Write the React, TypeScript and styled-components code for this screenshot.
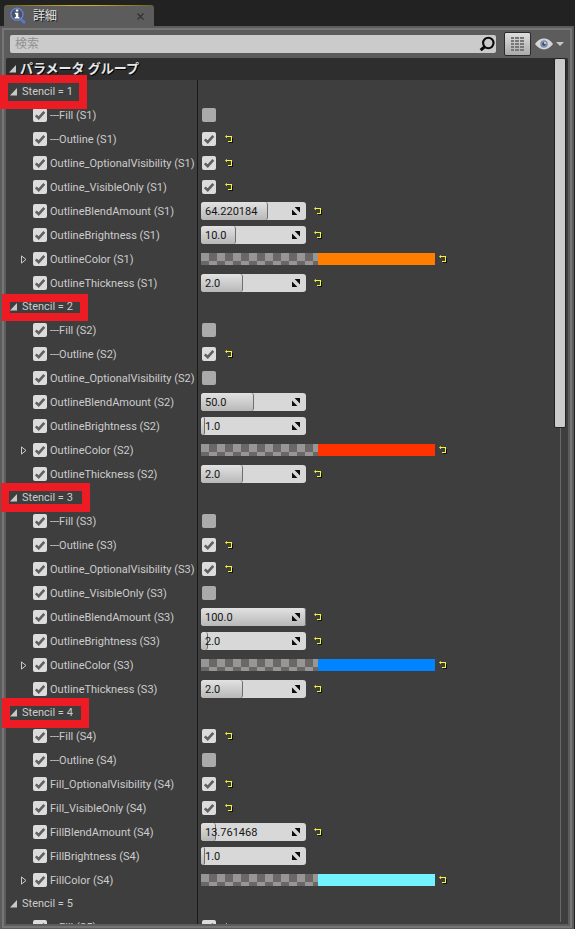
import React from 'react';
import styled, { createGlobalStyle, css } from 'styled-components';

const GlobalStyle = createGlobalStyle`
  *, *::before, *::after { box-sizing: border-box; }
  html, body { margin: 0; height: 100%; }
  #root { height: 100%; }
  body {
    background: #222222;
    color: #cccccc;
    font: 11px/17px Roboto, "Noto Sans CJK JP", sans-serif;
  }
  button, input { font: inherit; }
`;

const Page = styled.div`
  position: relative;
  display: flex;
  flex-direction: column;
  height: 100vh;
  padding: 5px 1px 0 0;
  overflow: hidden;
`;

const TabBar = styled.div`
  display: flex;
  flex: none;
  padding-left: 4px;
`;

const Tab = styled.div`
  display: flex;
  align-items: center;
  width: 150px;
  height: 21px;
  padding: 1px 10px 0 5px;
  background:
    linear-gradient(90deg, #6e6420, #cdb21a 45%, #cdb21a 60%, #6e6420) top / 100% 1px no-repeat,
    #5c5c5c;
  border-radius: 3px 3px 0 0;
`;

const TabTitle = styled.span`
  flex: 1;
  margin-left: 6px;
  color: #e2e2e2;
  font-size: 12px;
  line-height: 16px;
  text-shadow: 1px 1px 0 #1c1c1c;
`;

const PlainButton = styled.button`
  display: flex;
  flex: none;
  align-items: center;
  justify-content: center;
  padding: 0;
  border: 0;
  background: none;
  color: inherit;
`;

const Frame = styled.main`
  display: flex;
  flex: 1;
  min-height: 0;
  border: 2px solid #5c5c5c;
  border-bottom-width: 1px;
`;

const Panel = styled.div`
  display: flex;
  flex: 1;
  flex-direction: column;
  min-width: 0;
  border: 2px solid #767676;
  box-shadow: inset 0 0 0 2px #5c5c5c;
  background: #3e3e3e;
`;

const Toolbar = styled.div`
  display: flex;
  flex: none;
  align-items: center;
  height: 28px;
  padding: 0 5px 0 6px;
  background: #5c5c5c;
`;

const SearchBox = styled.label`
  display: flex;
  flex: 1;
  align-items: center;
  height: 18px;
  padding: 0 1px 0 5px;
  border-radius: 2px;
  background: #cbcbcb;
`;

const SearchInput = styled.input`
  flex: 1;
  min-width: 0;
  height: 18px;
  padding: 0;
  border: 0;
  outline: 0;
  background: none;
  color: #333333;
  font-size: 12px;
  &::placeholder { color: #929292; opacity: 1; }
`;

const GridButton = styled(PlainButton)`
  width: 27px;
  height: 24px;
  margin: 0 4px 0 8px;
  border: 1px solid #2a2a2a;
  border-radius: 2px;
  background: linear-gradient(#dedede, #aaaaaa);
`;

const Content = styled.div`
  display: flex;
  flex: 1;
  min-height: 0;
  margin: 0 2px 2px;
  overflow: hidden;
`;

const List = styled.div`
  flex: 1;
  min-width: 0;
  overflow: hidden;
`;

const Scroll = styled.div`
  position: absolute;
  top: 58px;
  right: 9px;
  bottom: 7px;
  display: flex;
  flex-direction: column;
  align-items: center;
  width: 12px;
`;

const Thumb = styled.div`
  flex: 0 0 42.8%;
  width: 12px;
  border: 1px solid #222222;
  border-radius: 2px;
  background: #cbcbcb;
`;

const Track = styled.div`
  flex: 1;
  width: 1px;
  background: #686868;
`;

const Category = styled.h1`
  display: flex;
  align-items: center;
  gap: 4px;
  height: 22px;
  margin: 0;
  padding-left: 3px;
  border-radius: 4px 4px 0 0;
  background: #2e2e2e;
  color: #e6e6e6;
  font-size: 13px;
  line-height: 20px;
  font-weight: 700;
  text-shadow: 1px 1px 0 #000000;
`;

const Groups = styled.div`
  background: linear-gradient(#181818, #181818) 191px 0 / 1px 100% no-repeat;
`;

const GroupHeader = styled.h2`
  display: flex;
  align-items: center;
  gap: 5px;
  height: 23px;
  margin: 0;
  padding-left: 4px;
  font-size: 11px;
  font-weight: 400;
`;

const Row = styled.div`
  display: grid;
  grid-template-columns: 191px 1fr;
  height: 24px;
`;

const NameCell = styled.div`
  display: flex;
  align-items: center;
  min-width: 0;
  overflow: hidden;
`;

const Gutter = styled.div`
  display: flex;
  flex: none;
  width: 27px;
  padding-left: 15px;
`;

const NameLabel = styled.label`
  display: flex;
  align-items: center;
  gap: 3px;
  white-space: nowrap;
  font-kerning: none;
`;

const ValueCell = styled.div`
  display: flex;
  align-items: center;
  padding-left: 4px;
`;

const CheckInput = styled.input<{ $inset?: boolean }>`
  flex: none;
  appearance: none;
  width: 14px;
  height: 14px;
  margin: 0 ${(p) => (p.$inset ? 1 : 0)}px;
  border-radius: 2px;
  background: #aaaaaa;
  &:checked {
    background: #dcdcdc
      url("data:image/svg+xml,%3Csvg xmlns='http://www.w3.org/2000/svg' viewBox='0 0 14 14'%3E%3Cpath d='M2.8 7.4 5.7 10.2 11.3 3.8' fill='none' stroke='%23606060' stroke-width='2.6'/%3E%3C/svg%3E")
      center / 14px 14px;
  }
`;

const Spin = styled.label`
  position: relative;
  display: flex;
  align-items: center;
  width: 105px;
  height: 18px;
  padding: 0 6px 0 4px;
  border-radius: 3px;
  background: #d8d8d8;
  overflow: hidden;
`;

const SpinFill = styled.span`
  position: absolute;
  inset: 0 auto 0 0;
  border-right: 1px solid #6e6e6e;
  border-radius: 3px;
  background: linear-gradient(#e2e2e2, #b8b8b8);
`;

const SpinInput = styled.input`
  position: relative;
  flex: 1;
  min-width: 0;
  height: 17px;
  padding: 0;
  border: 0;
  outline: 0;
  background: none;
  color: #151515;
`;

const DragHandle = styled.span`
  position: relative;
  display: flex;
  flex: none;
`;

const Swatch = styled.button<{ $color: string }>`
  width: 234px;
  height: 12px;
  padding: 0;
  border: 0;
  ${(p) => css`
    background:
      linear-gradient(${p.$color}, ${p.$color}) right / 50% 100% no-repeat,
      repeating-conic-gradient(#6b6767 0 25%, #969696 0 50%) 0 0 / 16px 16px;
  `}
`;

const ResetButton = styled(PlainButton)<{ $gap: number }>`
  width: 9px;
  height: 9px;
  margin-left: ${(p) => p.$gap}px;
`;

const Marker = styled.div<{ $x: number; $y: number; $w: number; $h: number }>`
  position: absolute;
  left: ${(p) => p.$x}px;
  top: ${(p) => p.$y}px;
  width: ${(p) => p.$w}px;
  height: ${(p) => p.$h}px;
  border: 8px solid #ed1c24;
  pointer-events: none;
`;

const OpenArrow = () => (
  <svg width="7" height="8" viewBox="0 0 7 8" aria-hidden="true">
    <path d="M7 0V7.5H0z" fill="#c8c8c8" />
  </svg>
);

const ClosedArrow = () => (
  <svg width="6" height="9" viewBox="0 0 6 9" aria-hidden="true">
    <path d="M.5 .9 5 4.5 .5 8.1z" fill="none" stroke="#c8c8c8" />
  </svg>
);

const ResetIcon = () => (
  <svg width="9" height="9" viewBox="0 0 9 9" aria-hidden="true">
    <path d="M3 3H8V8H4V7H7V3z" fill="#111111" />
    <path d="M0 1.5 2 0V1H7V7H3V6H6V2H2V3.2z" fill="#f4f43c" />
  </svg>
);

const DragIcon = () => (
  <svg width="8" height="8" viewBox="0 0 8 8" aria-hidden="true">
    <path d="M2.6 0H8V5.4z" fill="#0c0c0c" />
    <path d="M0 2.6V8H5.4z" fill="#0c0c0c" />
  </svg>
);

const DetailsIcon = () => (
  <svg width="18" height="18" viewBox="0 0 18 18" aria-hidden="true">
    <path d="M11 11.5 16 16" stroke="#5578d8" strokeWidth="2.6" />
    <circle cx="8" cy="7.2" r="6" fill="#4a5164" stroke="#6486d6" strokeWidth="1.3" />
    <path d="M6.8 2.6H9.3V4.6H6.8zM5.9 5.8H9.3V10H10.5V11.5H5.7V10H6.9V7.3H5.9z" fill="#ffffff" />
  </svg>
);

const CloseIcon = () => (
  <svg width="7" height="7" viewBox="0 0 7 7" aria-hidden="true">
    <path d="M.5 .5 6.5 6.5M6.5 .5 .5 6.5" stroke="#303030" strokeWidth="1.1" />
  </svg>
);

const SearchIcon = () => (
  <svg width="16" height="16" viewBox="0 0 16 16" aria-hidden="true">
    <circle cx="9.3" cy="7" r="5.2" fill="none" stroke="#0a0a0a" strokeWidth="2.1" />
    <path d="M5.6 10.8 1.6 14.2" stroke="#0a0a0a" strokeWidth="3" />
  </svg>
);

const GridIcon = () => (
  <svg width="13" height="14" viewBox="0 0 13 14" aria-hidden="true" shapeRendering="crispEdges">
    <path
      d="M0 1H3M4 1H8M9 1H13M0 4H3M4 4H8M9 4H13M0 7H3M4 7H8M9 7H13M0 10H3M4 10H8M9 10H13M0 13H3M4 13H8M9 13H13"
      stroke="#777777"
      strokeWidth="2"
    />
  </svg>
);

const EyeIcon = () => (
  <svg width="30" height="12" viewBox="0 0 30 12" aria-hidden="true">
    <path d="M0 6Q4 .6 9 .6T18 6Q14 11.4 9 11.4T0 6z" fill="#d6d6d6" />
    <circle cx="9" cy="6" r="3.8" fill="#7d90b2" />
    <circle cx="9" cy="6" r="1.8" fill="#3e4c6a" />
    <circle cx="10" cy="5" r="1" fill="#dfe7f5" />
    <path d="M21 4H29L25 8z" fill="#c8c8c8" />
  </svg>
);

type Value =
  | { kind: 'check'; on: boolean }
  | { kind: 'number'; text: string; fill: number }
  | { kind: 'color'; color: string };

interface Param {
  name: string;
  value: Value;
  reset: boolean;
}

const check = (name: string, on: boolean): Param => ({ name, value: { kind: 'check', on }, reset: on });
const num = (name: string, text: string, fill: number, reset: boolean): Param => ({
  name,
  value: { kind: 'number', text, fill },
  reset,
});
const color = (name: string, c: string): Param => ({ name, value: { kind: 'color', color: c }, reset: true });

const groups: { title: string; params: Param[] }[] = [
  {
    title: 'Stencil = 1',
    params: [
      check('---Fill (S1)', false),
      check('---Outline (S1)', true),
      check('Outline_OptionalVisibility (S1)', true),
      check('Outline_VisibleOnly (S1)', true),
      num('OutlineBlendAmount (S1)', '64.220184', 64, true),
      num('OutlineBrightness (S1)', '10.0', 33, true),
      color('OutlineColor (S1)', '#ff7e00'),
      num('OutlineThickness (S1)', '2.0', 40, true),
    ],
  },
  {
    title: 'Stencil = 2',
    params: [
      check('---Fill (S2)', false),
      check('---Outline (S2)', true),
      check('Outline_OptionalVisibility (S2)', false),
      num('OutlineBlendAmount (S2)', '50.0', 50, false),
      num('OutlineBrightness (S2)', '1.0', 4, false),
      color('OutlineColor (S2)', '#ff3200'),
      num('OutlineThickness (S2)', '2.0', 40, true),
    ],
  },
  {
    title: 'Stencil = 3',
    params: [
      check('---Fill (S3)', false),
      check('---Outline (S3)', true),
      check('Outline_OptionalVisibility (S3)', true),
      check('Outline_VisibleOnly (S3)', false),
      num('OutlineBlendAmount (S3)', '100.0', 100, true),
      num('OutlineBrightness (S3)', '2.0', 7, true),
      color('OutlineColor (S3)', '#0084ff'),
      num('OutlineThickness (S3)', '2.0', 40, true),
    ],
  },
  {
    title: 'Stencil = 4',
    params: [
      check('---Fill (S4)', true),
      check('---Outline (S4)', false),
      check('Fill_OptionalVisibility (S4)', true),
      check('Fill_VisibleOnly (S4)', true),
      num('FillBlendAmount (S4)', '13.761468', 14, true),
      num('FillBrightness (S4)', '1.0', 4, false),
      color('FillColor (S4)', '#73f3ff'),
    ],
  },
  { title: 'Stencil = 5', params: [check('---Fill (S5)', true)] },
];

const ValueEditor = ({ name, value }: { name: string; value: Value }) => {
  if (value.kind === 'check') {
    return <CheckInput $inset type="checkbox" defaultChecked={value.on} aria-label={`${name} value`} />;
  }
  if (value.kind === 'number') {
    return (
      <Spin>
        <SpinFill style={{ width: `${value.fill}%` }} />
        <SpinInput defaultValue={value.text} aria-label={name} />
        <DragHandle>
          <DragIcon />
        </DragHandle>
      </Spin>
    );
  }
  return <Swatch type="button" $color={value.color} aria-label={name} />;
};

const ParamRow = ({ param }: { param: Param }) => (
  <Row>
    <NameCell>
      <Gutter>
        {param.value.kind === 'color' && (
          <PlainButton type="button" aria-label={`Expand ${param.name}`}>
            <ClosedArrow />
          </PlainButton>
        )}
      </Gutter>
      <NameLabel>
        <CheckInput type="checkbox" defaultChecked />
        {param.name}
      </NameLabel>
    </NameCell>
    <ValueCell>
      <ValueEditor name={param.name} value={param.value} />
      {param.reset && (
        <ResetButton
          type="button"
          $gap={param.value.kind === 'color' ? 4 : 8}
          aria-label={`Reset ${param.name}`}
        >
          <ResetIcon />
        </ResetButton>
      )}
    </ValueCell>
  </Row>
);

export default function App() {
  return (
    <>
      <GlobalStyle />
      <Page>
        <TabBar>
          <Tab>
            <DetailsIcon />
            <TabTitle>詳細</TabTitle>
            <PlainButton type="button" aria-label="Close">
              <CloseIcon />
            </PlainButton>
          </Tab>
        </TabBar>
        <Frame>
          <Panel>
            <Toolbar>
              <SearchBox>
                <SearchInput type="text" placeholder="検索" aria-label="検索" />
                <SearchIcon />
              </SearchBox>
              <GridButton type="button" aria-label="Property matrix">
                <GridIcon />
              </GridButton>
              <PlainButton type="button" aria-label="View options">
                <EyeIcon />
              </PlainButton>
            </Toolbar>
            <Content>
              <List>
                <Category>
                  <OpenArrow />
                  <span>パラメータ グループ</span>
                </Category>
                <Groups>
                  {groups.map((g) => (
                    <section key={g.title}>
                      <GroupHeader>
                        <OpenArrow />
                        <span>{g.title}</span>
                      </GroupHeader>
                      {g.params.map((p) => (
                        <ParamRow key={p.name} param={p} />
                      ))}
                    </section>
                  ))}
                </Groups>
              </List>
            </Content>
          </Panel>
        </Frame>
        <Scroll>
          <Thumb />
          <Track />
        </Scroll>
        <Marker $x={0} $y={75} $w={87} $h={34} />
        <Marker $x={2} $y={294} $w={86} $h={27} />
        <Marker $x={1} $y={483} $w={89} $h={29} />
        <Marker $x={2} $y={698} $w={87} $h={30} />
      </Page>
    </>
  );
}
